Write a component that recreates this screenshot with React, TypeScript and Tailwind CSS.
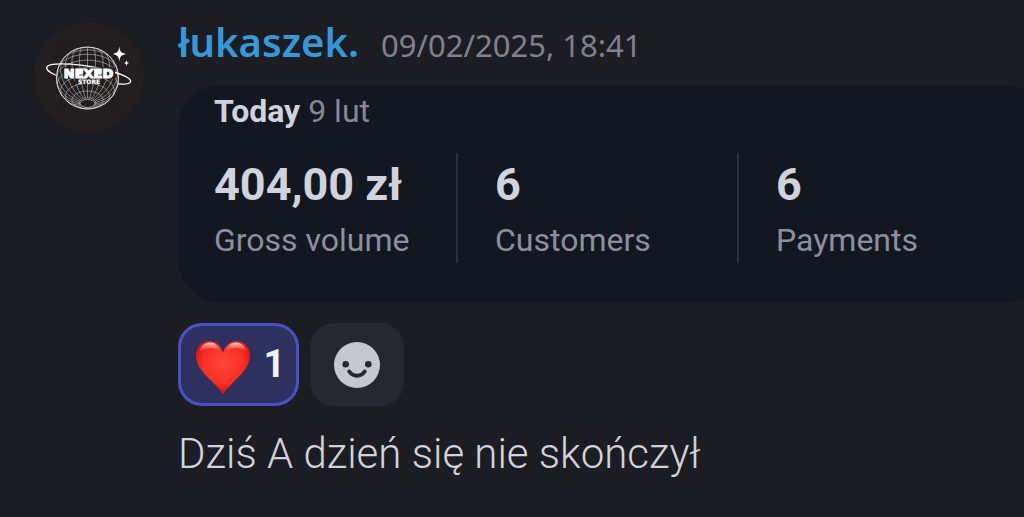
import React from 'react';

const GLOBE = { cx: 53.5, cy: 56, r: 31, tilt: (35 * Math.PI) / 180 };

// Orthographic projection of a point on the globe, seen from below the equator.
function project(lat: number, lon: number) {
  const x = Math.cos(lat) * Math.sin(lon);
  const y = Math.sin(lat);
  const z = Math.cos(lat) * Math.cos(lon);
  const c = Math.cos(GLOBE.tilt);
  const s = Math.sin(GLOBE.tilt);
  return {
    x: GLOBE.cx + GLOBE.r * x,
    y: GLOBE.cy - GLOBE.r * (y * c + z * s),
    visible: z * c - y * s >= 0,
  };
}

function trace(points: { x: number; y: number; visible: boolean }[]) {
  let d = '';
  let down = false;
  for (const p of points) {
    if (p.visible) d += `${down ? 'L' : 'M'}${p.x.toFixed(2)} ${p.y.toFixed(2)}`;
    down = p.visible;
  }
  return d;
}

const rad = (deg: number) => (deg * Math.PI) / 180;
const range = (from: number, to: number, step: number) =>
  Array.from({ length: Math.floor((to - from) / step) + 1 }, (_, i) => from + i * step);

const parallels = range(-75, 45, 15).map((lat) =>
  trace(range(-180, 180, 5).map((lon) => project(rad(lat), rad(lon)))),
);
const meridians = range(-180, 165, 15).map((lon) =>
  trace(range(-75, 90, 5).map((lat) => project(rad(lat), rad(lon)))),
);

function Avatar() {
  return (
    <svg viewBox="0 0 110 110" className="size-[110px] shrink-0 rounded-full bg-[#231f20]" role="img" aria-label="Nexed Store">
      <g fill="none" stroke="#dedede" strokeWidth="0.6" opacity="0.85">
        {[...parallels, ...meridians].map((d, i) => (
          <path key={i} d={d} />
        ))}
      </g>
      <circle cx="53.5" cy="56" r="31" fill="none" stroke="#e4e4e4" strokeWidth="0.9" />
      <ellipse cx="53.5" cy="81.5" rx="7.5" ry="4" fill="#231f20" stroke="#dedede" strokeWidth="0.6" />
      <path
        d="M21.5 53C14.5 50.5 10.500 46 14 43.800C19 40.500 48 41 78 49.500C92 53.500 98 57.500 96.500 60C95.500 61.800 91 62.500 84.500 61.800"
        fill="none"
        stroke="#fff"
        strokeWidth="1.3"
        strokeLinecap="round"
      />
      <path d="M29 45.500H81V57H69V62H41V57H29Z" fill="#231f20" />
      <g fill="#fff" stroke="#fff" textAnchor="middle" className="font-['DejaVu_Sans'] font-bold">
        <text x="54.500" y="55.500" fontSize="13" strokeWidth="1.2">NEXED</text>
        <text x="55" y="61.500" fontSize="6" strokeWidth="0.2">STORE</text>
      </g>
      <path d="M85.300 24.500C86 29.500 87 31 92 32C87 33 86 34.500 85.300 39.500C84.600 34.500 83.600 33 78.600 32C83.600 31 84.600 29.500 85.300 24.500Z" fill="#fff" />
      <path d="M92.500 38C92.900 40.200 93.300 40.700 95.500 41C93.300 41.300 92.900 41.800 92.500 44C92.100 41.800 91.700 41.300 89.500 41C91.700 40.700 92.100 40.200 92.500 38Z" fill="#fff" />
    </svg>
  );
}

function Heart() {
  return (
    <svg viewBox="0 -6 54 60" className="h-[60px] w-[54px]" aria-hidden="true">
      <defs>
        <radialGradient id="heart" cx="0.5" cy="0.42" r="0.62">
          <stop offset="0" stopColor="#ff4638" />
          <stop offset="0.6" stopColor="#fb2f24" />
          <stop offset="1" stopColor="#c60f0b" />
        </radialGradient>
        <linearGradient id="shine" x1="0" y1="0" x2="0" y2="1">
          <stop offset="0" stopColor="#fff" stopOpacity="0.8" />
          <stop offset="1" stopColor="#ff6a5a" stopOpacity="0" />
        </linearGradient>
      </defs>
      <path
        d="M27 53.500C24.500 49 19 43.500 12 36.500C5 29.500 0 23 0 14.500C0 6 6 0 13.500 0C19.500 0 24.500 4 27 11.500C29.500 4 34.500 0 40.500 0C48 0 54 6 54 14.500C54 23 49 29.500 42 36.500C35 43.500 29.500 49 27 53.500Z"
        fill="url(#heart)"
      />
      <path d="M3.500 12C4 5 8.500 1.500 14 1.500C19 1.500 22.500 4.500 23.500 10C17 5.500 9 6 3.500 12Z" fill="url(#shine)" />
      <path d="M50.500 12C50 5 45.500 1.500 40 1.500C35 1.500 31.500 4.500 30.500 10C37 5.500 45 6 50.500 12Z" fill="url(#shine)" />
    </svg>
  );
}

function Smile() {
  return (
    <svg viewBox="0 0 46 46" className="size-[46px]" aria-hidden="true">
      <circle cx="23" cy="23" r="23" fill="#c7c8ce" />
      <circle cx="11.700" cy="22.300" r="3.300" fill="#27272f" />
      <circle cx="34.300" cy="22.300" r="3.300" fill="#27272f" />
      <path d="M15.300 29.500C19 35 27 35 30.700 29.500" fill="none" stroke="#27272f" strokeWidth="4" strokeLinecap="round" />
    </svg>
  );
}

const stats = [
  { value: '404,00 zł', label: 'Gross volume' },
  { value: '6', label: 'Customers' },
  { value: '6', label: 'Payments' },
];

export default function App() {
  return (
    <main className="min-h-screen overflow-hidden bg-[#1c1d22] font-['Noto_Sans',sans-serif]">
      <article className="flex gap-[34px] pt-[22px] pl-[34px]">
        <Avatar />
        <div className="min-w-0 flex-1">
          <header className="flex h-[63px] items-baseline gap-[22px] whitespace-nowrap">
            <h1 className="text-[40px] leading-[40px] font-semibold text-[#3498db]">łukaszek.</h1>
            <time dateTime="2025-02-09T18:41" className="text-[31px] leading-[40px] text-[#81818b]">
              09/02/2025, 18:41
            </time>
          </header>

          <section className="-mr-6 h-[218px] rounded-[44px] bg-[#13171f] pt-1 pl-9 font-['Roboto',sans-serif]">
            <h2 className="text-[32px] leading-[44px] font-bold text-[#d0d3dc]">
              Today <span className="font-normal text-[#858995]">9 lut</span>
            </h2>
            <dl className="mt-5 flex">
              {stats.map((s, i) => (
                <div
                  key={s.label}
                  className={
                    i === 0
                      ? 'flex h-[110px] w-[242px] shrink-0 flex-col-reverse justify-end'
                      : 'flex h-[110px] w-[281px] shrink-0 flex-col-reverse justify-end border-l-2 border-[#2c3038] pl-[37px]'
                  }
                >
                  <dt className="text-[32px] leading-[46px] text-[#8b90a0]">{s.label}</dt>
                  <dd className="text-[45px] leading-[64px] font-bold text-[#d0d3dc]">{s.value}</dd>
                </div>
              ))}
            </dl>
          </section>

          <div className="mt-5 flex gap-[11px]">
            <button
              type="button"
              aria-pressed="true"
              className="flex h-[83px] w-[121px] items-center justify-center gap-[14px] rounded-[24px] border-3 border-[#4752c4] bg-[#2e3160] pl-1 font-['Roboto',sans-serif] text-[38px] font-bold text-[#f0f0f5]"
            >
              <Heart />
              1
            </button>
            <button
              type="button"
              aria-label="Add reaction"
              className="flex h-[83px] w-[94px] items-center justify-center rounded-[24px] bg-[#27272f]"
            >
              <Smile />
            </button>
          </div>

          <p className="mt-5 font-['Roboto',sans-serif] text-[42px] leading-[56px] font-light text-[#d2d3d8]">
            Dziś A dzień się nie skończył
          </p>
        </div>
      </article>
    </main>
  );
}
